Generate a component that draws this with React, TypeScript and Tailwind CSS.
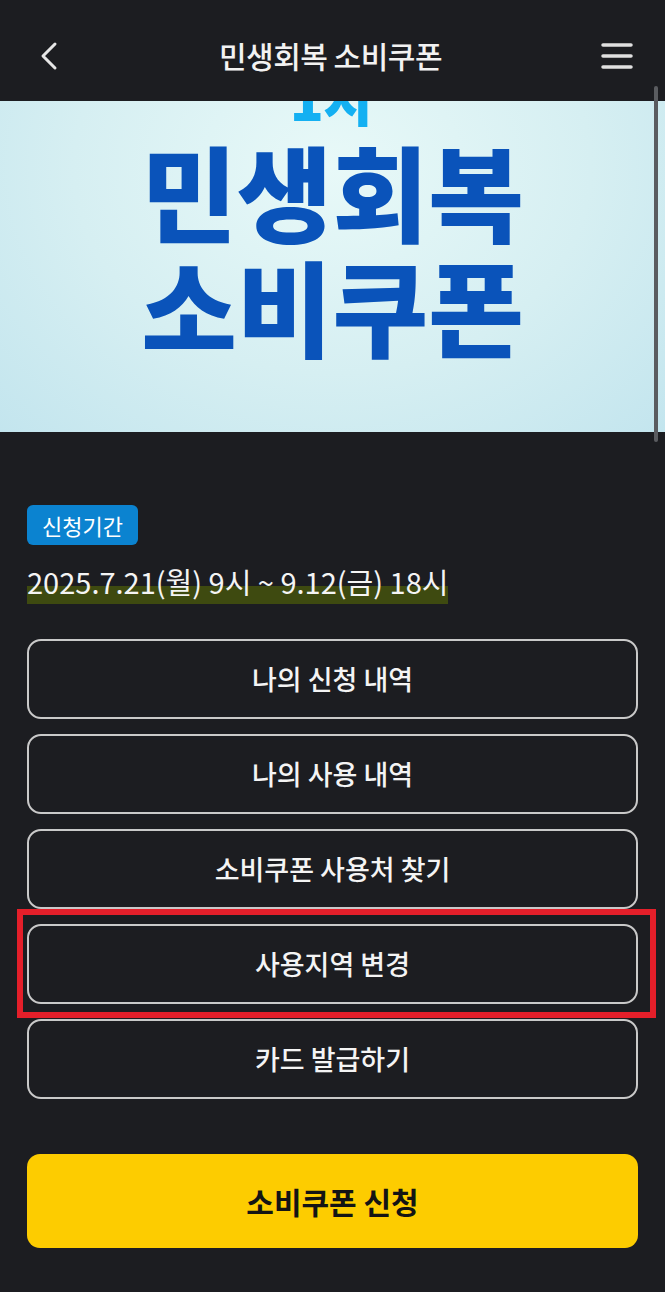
import React from "react";

const menus = ["나의 신청 내역", "나의 사용 내역", "소비쿠폰 사용처 찾기", "사용지역 변경", "카드 발급하기"];

export default function App() {
  return (
    <div
      className="relative min-h-[1292px] w-full bg-[#1c1d21] text-white"
      style={{ fontFamily: '"Noto Sans CJK KR", "Noto Sans", sans-serif' }}
    >
      {/* Header */}
      <header className="flex h-[101px] items-center justify-between px-[36px] pt-[10px]">
        <svg width="22" height="30" viewBox="0 0 22 30" fill="none" className="ml-[2px]">
          <path d="M17 3 L5 15 L17 27" stroke="#e6e6e6" strokeWidth="3" strokeLinecap="round" strokeLinejoin="round" />
        </svg>
        <h1 className="text-[30px] font-medium tracking-[-0.5px] text-[#f2f2f2]">민생회복 소비쿠폰</h1>
        <svg width="32" height="28" viewBox="0 0 32 28" fill="none" className="-mr-[4px]">
          <path d="M2 3 H30 M2 14 H30 M2 25 H30" stroke="#e0e0e0" strokeWidth="3.5" strokeLinecap="round" />
        </svg>
      </header>

      {/* Banner */}
      <div className="relative h-[331px] overflow-hidden bg-[radial-gradient(ellipse_at_50%_20%,#e8f9f8_0%,#d6eff2_55%,#c3e5ee_100%)]">
        <div className="flex flex-col items-center">
          <div className="-mt-[32px] text-[56px] font-black leading-none text-[#14b0f2]">1차</div>
          <div className="mt-[7px] text-[104px] font-black leading-[115px] text-[#0a53ba]">민생회복</div>
          <div className="text-[104px] font-black leading-[115px] text-[#0a53ba]">소비쿠폰</div>
        </div>
      </div>

      {/* Scrollbar */}
      <div className="absolute right-[7px] top-[86px] h-[356px] w-[4px] rounded-full bg-[#5a5c60]" />

      {/* Content */}
      <div className="px-[27px] pt-[73px]">
        <div className="inline-flex h-[40px] items-center rounded-[6px] bg-[#0b83d0] px-[15px] text-[22px] text-white">
          신청기간
        </div>
        <div className="mt-[16px] leading-[40px]">
          <span className="bg-[linear-gradient(transparent_58%,#3e4a10_58%)] pb-[2px] text-[29px] text-[#f4f4f4]">
            2025.7.21(월) 9시 ~ 9.12(금) 18시
          </span>
        </div>

        <div className="mt-[32px] flex flex-col gap-[15px]">
          {menus.map((m, i) => (
            <div key={m} className="relative">
              <button className="flex h-[80px] w-full items-center justify-center rounded-[14px] border-2 border-[#c9c9c9] bg-[#1c1d21] text-[27px] font-medium text-[#f4f4f4]">
                {m}
              </button>
              {i === 3 && (
                <div className="pointer-events-none absolute -bottom-[14px] -left-[10px] -right-[18px] -top-[15px] border-[6px] border-[#e41f2a]" />
              )}
            </div>
          ))}
        </div>

        <button className="mt-[55px] flex h-[94px] w-full items-center justify-center rounded-[13px] bg-[#fdcc00] text-[30px] font-bold text-[#141414]">
          소비쿠폰 신청
        </button>
      </div>
    </div>
  );
}
